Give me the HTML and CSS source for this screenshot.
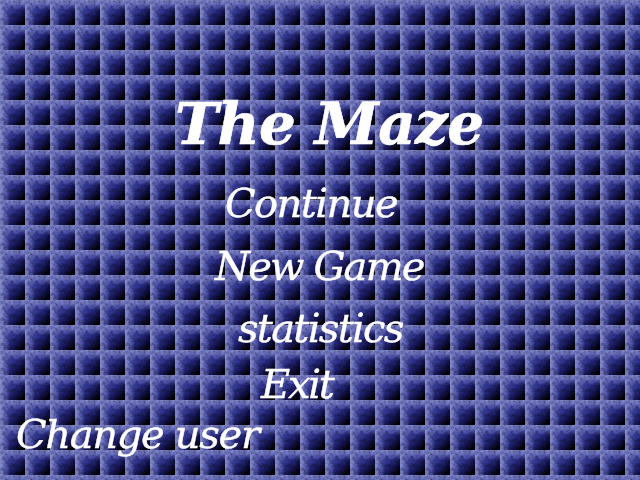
FILE: index.html
```html
<!DOCTYPE html>
<html lang="en">

<head>
    <meta charset="UTF-8">
    <title>The Maze</title>
    <link rel="stylesheet" href="styles.css">
</head>

<body>
    <svg class="grain" width="640" height="480" aria-hidden="true">
        <filter id="noise" x="0" y="0" width="100%" height="100%">
            <feTurbulence type="fractalNoise" baseFrequency="0.28" numOctaves="3" seed="7" stitchTiles="stitch"/>
            <feColorMatrix type="matrix" values="1.5 0 0 0 -0.25  1.5 0 0 0 -0.25  1.5 0 0 0 -0.25  0 0 0 0 1"/>
        </filter>
        <pattern id="tile" width="25" height="25" patternUnits="userSpaceOnUse">
            <rect width="25" height="25" filter="url(#noise)"/>
        </pattern>
        <rect width="640" height="480" fill="url(#tile)"/>
    </svg>
    <div class="menu">
        <h1 class="title">The Maze</h1>
        <div class="item continue">Continue</div>
        <div class="item new-game">New Game</div>
        <div class="item statistics">statistics</div>
        <div class="item exit">Exit</div>
        <div class="item change-user">Change user</div>
    </div>
</body>

</html>
```

FILE: styles.css
```css
html, body {
    margin: 0;
    height: 480px;
    overflow: hidden;
}

body {
    position: relative;
    background-color: #0a0a30;
    background-image:
        linear-gradient(to right, #5e629c 0, #505493 3px, rgba(70, 74, 135, 0) 10px),
        linear-gradient(to bottom, #5e629c 0, #505493 3px, rgba(70, 74, 135, 0) 10px),
        linear-gradient(135deg, #2e3270 0%, #24276a 45%, #0e0e3a 72%, #000 92%);
    background-size: 25px 25px;
}

.grain {
    position: absolute;
    top: 0;
    left: 0;
    mix-blend-mode: overlay;
    opacity: 0.6;
}

.menu {
    position: relative;
    display: flex;
    flex-direction: column;
    align-items: flex-start;
    padding-top: 89px;
    font-family: "DejaVu Serif", serif;
    font-style: italic;
    color: white;
}

.title {
    margin: 0 0 0 175px;
    font-size: 58px;
    line-height: 70px;
    font-weight: bold;
    letter-spacing: -0.7px;
    -webkit-text-stroke: 0.6px white;
}

.item {
    font-size: 40px;
    line-height: 50px;
    letter-spacing: -1.3px;
    -webkit-text-stroke: 0.4px white;
}

.continue {
    margin-top: 19px;
    margin-left: 225px;
    letter-spacing: -1.55px;
}

.new-game {
    margin-top: 13px;
    margin-left: 215px;
    letter-spacing: -1.8px;
}

.statistics {
    margin-top: 12px;
    margin-left: 238px;
    letter-spacing: -1.7px;
}

.exit {
    margin-top: 6px;
    margin-left: 261px;
    letter-spacing: -2.3px;
}

.change-user {
    margin-left: 16px;
}
```
